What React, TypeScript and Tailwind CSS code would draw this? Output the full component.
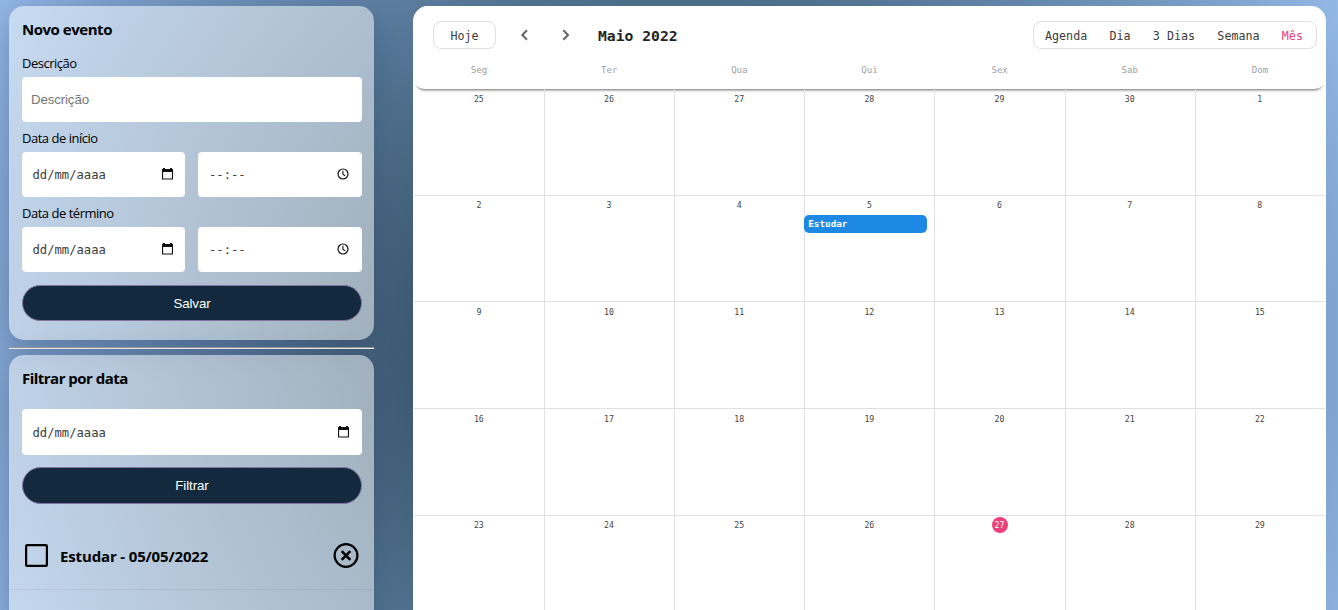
import React from "react";

const weekdays = ["Seg", "Ter", "Qua", "Qui", "Sex", "Sab", "Dom"];
const weeks = [
  [25, 26, 27, 28, 29, 30, 1],
  [2, 3, 4, 5, 6, 7, 8],
  [9, 10, 11, 12, 13, 14, 15],
  [16, 17, 18, 19, 20, 21, 22],
  [23, 24, 25, 26, 27, 28, 29],
];
const views = ["Agenda", "Dia", "3 Dias", "Semana", "Mês"];

function CalendarIcon() {
  return (
    <svg width="11" height="12" viewBox="0 0 11 12" className="mb-px shrink-0">
      <path d="M1 0h2v1h5V0h2v1h1v10.5H0V1h1zM1.1 4v6.4h8.8V4z" fill="#111" fillRule="evenodd" />
    </svg>
  );
}

function ClockIcon() {
  return (
    <svg width="12" height="12" viewBox="0 0 12 12" className="mb-px shrink-0" fill="none" stroke="#111">
      <circle cx="6" cy="6" r="5" strokeWidth="1.2" />
      <path d="M5.9 2.8v3.4l2.3 1.7" strokeWidth="1.1" />
    </svg>
  );
}

function DateField({ padding = "pr-[12px] pl-[10.5px]" }: { padding?: string }) {
  return (
    <div className={`flex h-full w-full items-center justify-between rounded bg-white ${padding}`}>
      <span className="pt-[2px] font-['DejaVu_Sans_Mono',monospace] text-[12.2px] text-[#3c3c3c]">dd/mm/aaaa</span>
      <CalendarIcon />
    </div>
  );
}

function TimeField() {
  return (
    <div className="flex h-full w-full items-center justify-between rounded bg-white pr-[13.5px] pl-[11px]">
      <span className="pt-[2px] font-['DejaVu_Sans_Mono',monospace] text-[12.2px] text-[#3c3c3c]">--:--</span>
      <ClockIcon />
    </div>
  );
}

function DateTimeRow() {
  return (
    <div className="grid h-[45px] grid-cols-[163px_164px] gap-[13px]">
      <DateField />
      <TimeField />
    </div>
  );
}

function Label({ children }: { children: React.ReactNode }) {
  return <div className="h-[18px] text-[13px] leading-[18px] tracking-[-0.48px]">{children}</div>;
}

function Pill({ children, size }: { children: React.ReactNode; size: string }) {
  return (
    <button
      className={`block w-full rounded-full border border-[#8273a3] bg-[#13293d] font-['Liberation_Sans',sans-serif] text-[13.33px] tracking-[-0.1px] text-white ${size}`}
    >
      {children}
    </button>
  );
}

const card = "bg-white/50 shadow-[0_8px_32px_0_rgba(31,38,80,0.27)] pl-[13px] pr-[12px] text-black";

export default function App() {
  return (
    <div className="h-[610px] overflow-hidden font-['Open_Sans','Noto_Sans',sans-serif]">
      <div className="flex h-[700px] gap-[39px] bg-[radial-gradient(circle_at_50%_50%,#3b566d_0%,#3d5a73_34%,#4c6d88_46%,#5d7fa2_60%,#7ea3cd_87%,#94b9e8_100%)] pt-[6px] pr-[12px] pl-[9px]">
        <aside className="w-[365px] shrink-0">
          <section className={`h-[334px] rounded-[15px] pt-[13px] ${card}`}>
            <h2 className="h-[35px] text-[15px] leading-5 font-bold tracking-[-0.47px]">Novo evento</h2>
            <Label>Descrição</Label>
            <input
              placeholder="Descrição"
              className="mt-[5px] block h-[45px] w-full rounded bg-white px-[9px] font-['Liberation_Sans',sans-serif] text-[13.33px] tracking-[-0.15px] placeholder:text-[#757575]"
            />
            <div className="mt-[7px] mb-[5px]">
              <Label>Data de início</Label>
            </div>
            <DateTimeRow />
            <div className="mt-[7px] mb-[5px]">
              <Label>Data de término</Label>
            </div>
            <DateTimeRow />
            <div className="mt-[13px]">
              <Pill size="h-[36px] pt-px">Salvar</Pill>
            </div>
          </section>
          <div className="mt-[7px] mb-[6px] h-[2px] border-t border-b border-t-[#9a9a9a] border-b-[#eeeeee]" />
          <section className={`h-[345px] rounded-t-[15px] pt-[13px] ${card}`}>
            <h2 className="h-[41px] text-[15px] leading-5 font-bold tracking-[-0.52px]">Filtrar por data</h2>
            <div className="h-[46px]">
              <DateField padding="pr-[13px] pl-[10.5px]" />
            </div>
            <div className="mt-[12px]">
              <Pill size="h-[37px]">Filtrar</Pill>
            </div>
            <div className="-mr-[12px] -ml-[13px] mt-[18px] flex h-[68px] items-center border-b border-black/5 px-[13px] pt-[2px]">
              <svg width="29" height="29" viewBox="0 0 29 29" fill="none" stroke="#000" strokeWidth="2.2">
                <rect x="4.1" y="3.1" width="20.8" height="20.8" rx="1" />
              </svg>
              <span className="ml-[9px] text-[15px] font-bold tracking-[-0.15px]">Estudar - 05/05/2022</span>
              <svg className="mr-[2px] ml-auto" width="26" height="29" viewBox="0 0 26 29" fill="none" stroke="#000">
                <circle cx="13" cy="13.5" r="11.4" strokeWidth="2.2" />
                <path d="M8.7 9.2l8.6 8.6M17.3 9.2l-8.6 8.6" strokeWidth="2.6" />
              </svg>
            </div>
          </section>
        </aside>

        <main className="w-[913px] shrink-0 rounded-t-[15px] bg-white font-['DejaVu_Sans_Mono',monospace]">
          <header className="mx-px h-[83px] rounded-[10px] rounded-t-[15px] bg-white shadow-[0_4px_3px_-3px_rgba(0,0,0,0.6)]">
            <div className="flex items-center pt-[15px] pr-[8px] pl-[19px]">
              <button className="h-[28px] w-[63px] rounded-lg border border-[#e0e0e0] pt-[3px] text-[11.7px] text-[#3c3c3c]">
                Hoje
              </button>
              <svg className="ml-[24px]" width="9" height="12" viewBox="0 0 9 12" fill="none" stroke="#666" strokeWidth="2">
                <path d="M7 1.3L2.3 6L7 10.7" />
              </svg>
              <svg className="ml-[33px]" width="9" height="12" viewBox="0 0 9 12" fill="none" stroke="#666" strokeWidth="2">
                <path d="M1.3 1.3L6 6L1.3 10.7" />
              </svg>
              <h1 className="ml-[27px] pt-[2px] text-[14.7px] leading-5 font-bold text-[#222]">Maio 2022</h1>
              <nav className="ml-auto flex h-[28px] w-[284px] items-center justify-between rounded-lg border border-[#e0e0e0] pt-[3px] pr-[13px] pl-[11px] text-[11.7px] text-[#3c3c3c]">
                {views.map((v) => (
                  <span key={v} className={v === "Mês" ? "text-[#ec407a]" : ""}>
                    {v}
                  </span>
                ))}
              </nav>
            </div>
            <div className="mt-[14px] grid grid-cols-7 text-center text-[9.1px] leading-[14px] text-[#a0a0a0]">
              {weekdays.map((d) => (
                <span key={d}>{d}</span>
              ))}
            </div>
          </header>
          <div className="mr-[1.1px] ml-[0.8px]">
            {weeks.map((week, w) => (
              <div key={w} className="grid h-[106.7px] grid-cols-7 border-b border-[#e0e0e0]">
                {week.map((day, i) => {
                  const today = w === 4 && day === 27;
                  return (
                    <div
                      key={day}
                      className={`text-[8.2px] leading-4 text-[#444] ${w === 1 || w === 4 ? "pt-px" : "pt-[2px]"} ${i > 0 ? "border-l border-[#e0e0e0] pr-px" : ""}`}
                    >
                      <div
                        className={`mx-auto h-4 w-4 text-center ${today ? "rounded-full bg-[#ec407a] text-white" : ""}`}
                      >
                        {day}
                      </div>
                      {w === 1 && day === 5 && (
                        <div className="mt-[2px] -ml-px h-[18px] w-[123px] rounded-[5px] bg-[#1e88e5] pl-[4px] text-[9.3px] leading-[18px] font-bold text-white">
                          Estudar
                        </div>
                      )}
                    </div>
                  );
                })}
              </div>
            ))}
          </div>
        </main>
      </div>
    </div>
  );
}
